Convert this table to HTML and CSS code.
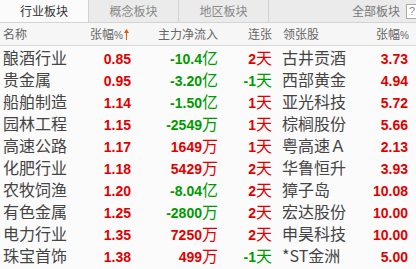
FILE: index.html
```html
<!DOCTYPE html>
<html>
<head>
<meta charset="utf-8">
<link rel="stylesheet" href="styles.css">
</head>
<body>
<div class="panel">
  <div class="tabs">
    <div class="tab active">行业板块</div>
    <div class="tab">概念板块</div>
    <div class="tab">地区板块</div>
    <div class="tab-rest">
      <span class="all">全部板块</span>
      <span class="help">?</span>
    </div>
  </div>
  <div class="grid head">
    <div class="c-name">名称</div>
    <div class="c-r c-pct">张幅<span class="pc">%</span><svg class="arrow" width="5" height="11" viewBox="0 0 5 11"><path d="M2.5 0 L5 4 L3 4 L3 11 L2 11 L2 4 L0 4 Z" fill="#e05a00"/></svg></div>
    <div class="c-r">主力净流入</div>
    <div class="c-r">连张</div>
    <div class="c-stock">领张股</div>
    <div class="c-r">张幅<span class="pc">%</span></div>
  </div>
  <div class="grid row"><div class="c-name">酿酒行业</div><div class="c-r num up">0.85</div><div class="c-r num down">-10.4<span class="u">亿</span></div><div class="c-r num up">2<span class="u">天</span></div><div class="c-stock">古井贡酒</div><div class="c-r num up">3.73</div></div>
  <div class="grid row"><div class="c-name">贵金属</div><div class="c-r num up">0.95</div><div class="c-r num down">-3.20<span class="u">亿</span></div><div class="c-r num down">-1<span class="u">天</span></div><div class="c-stock">西部黄金</div><div class="c-r num up">4.94</div></div>
  <div class="grid row"><div class="c-name">船舶制造</div><div class="c-r num up">1.14</div><div class="c-r num down">-1.50<span class="u">亿</span></div><div class="c-r num up">1<span class="u">天</span></div><div class="c-stock">亚光科技</div><div class="c-r num up">5.72</div></div>
  <div class="grid row"><div class="c-name">园林工程</div><div class="c-r num up">1.15</div><div class="c-r num down">-2549<span class="u">万</span></div><div class="c-r num up">1<span class="u">天</span></div><div class="c-stock">棕榈股份</div><div class="c-r num up">5.66</div></div>
  <div class="grid row"><div class="c-name">高速公路</div><div class="c-r num up">1.17</div><div class="c-r num up">1649<span class="u">万</span></div><div class="c-r num up">1<span class="u">天</span></div><div class="c-stock">粤高速Ａ</div><div class="c-r num up">2.13</div></div>
  <div class="grid row"><div class="c-name">化肥行业</div><div class="c-r num up">1.18</div><div class="c-r num up">5429<span class="u">万</span></div><div class="c-r num up">2<span class="u">天</span></div><div class="c-stock">华鲁恒升</div><div class="c-r num up">3.93</div></div>
  <div class="grid row"><div class="c-name">农牧饲渔</div><div class="c-r num up">1.20</div><div class="c-r num down">-8.04<span class="u">亿</span></div><div class="c-r num up">2<span class="u">天</span></div><div class="c-stock">獐子岛</div><div class="c-r num up">10.08</div></div>
  <div class="grid row"><div class="c-name">有色金属</div><div class="c-r num up">1.25</div><div class="c-r num down">-2800<span class="u">万</span></div><div class="c-r num up">2<span class="u">天</span></div><div class="c-stock">宏达股份</div><div class="c-r num up">10.00</div></div>
  <div class="grid row"><div class="c-name">电力行业</div><div class="c-r num up">1.35</div><div class="c-r num up">7250<span class="u">万</span></div><div class="c-r num up">2<span class="u">天</span></div><div class="c-stock">申昊科技</div><div class="c-r num up">10.00</div></div>
  <div class="grid row"><div class="c-name">珠宝首饰</div><div class="c-r num up">1.38</div><div class="c-r num up">499<span class="u">万</span></div><div class="c-r num down">-1<span class="u">天</span></div><div class="c-stock">*ST金洲</div><div class="c-r num up">5.00</div></div>
</div>
</body>
</html>
```
FILE: styles.css
```css
html, body {
  margin: 0;
  padding: 0;
  background: #fbfbfb;
  overflow: hidden;
}
.panel {
  width: 416px;
  height: 269px;
  font-family: "Noto Sans CJK SC", "Liberation Sans", sans-serif;
  color: #444;
}
.tabs {
  display: flex;
  height: 22px;
  border-bottom: 1px solid #d4d4d4;
  background: #ebebeb;
}
.tab {
  width: 89px;
  border-right: 1px solid #d2d2d2;
  font-size: 12px;
  line-height: 22px;
  text-align: center;
  color: #888;
}
.tab.active {
  background: #fbfbfb;
  color: #333;
  width: 88px;
}
.tab-rest {
  flex: 1;
  display: flex;
  justify-content: flex-end;
  align-items: center;
  gap: 6px;
}
.all {
  font-size: 12px;
  color: #777;
  line-height: 22px;
}
.help {
  box-sizing: border-box;
  width: 10px;
  height: 15px;
  border: 1px solid #aaa;
  border-right: none;
  background: #fff;
  font-family: "Liberation Sans", sans-serif;
  font-size: 11px;
  line-height: 13px;
  color: #888;
  padding-left: 2px;
}
.grid {
  display: grid;
  grid-template-columns: 87px 41px 87px 54px 88px 48px;
  padding-left: 3px;
  align-items: baseline;
}
.head {
  height: 22px;
  line-height: 22px;
  font-size: 12px;
  color: #666;
  border-bottom: 1px solid #d8d8d8;
  background: #f6f6f6;
}
.row {
  height: 22px;
  line-height: 22px;
  font-size: 16px;
}
.c-r {
  text-align: right;
  white-space: nowrap;
}
.c-stock {
  padding-left: 10px;
  white-space: nowrap;
}
.head .c-stock {
  padding-left: 11px;
}
.c-pct {
  padding-right: 2px;
}
.pc {
  font-family: "Liberation Sans Narrow", "Liberation Sans", sans-serif;
  font-size: 10px;
  letter-spacing: -1px;
}
.arrow {
  margin-left: 2px;
  vertical-align: -1px;
}
.num {
  font-family: "Liberation Sans", sans-serif;
  font-weight: bold;
  font-size: 14px;
}
.u {
  font-family: "Noto Sans CJK SC", sans-serif;
  font-weight: normal;
  font-size: 16px;
}
.up { color: #e00000; }
.down { color: #009a00; }
```
